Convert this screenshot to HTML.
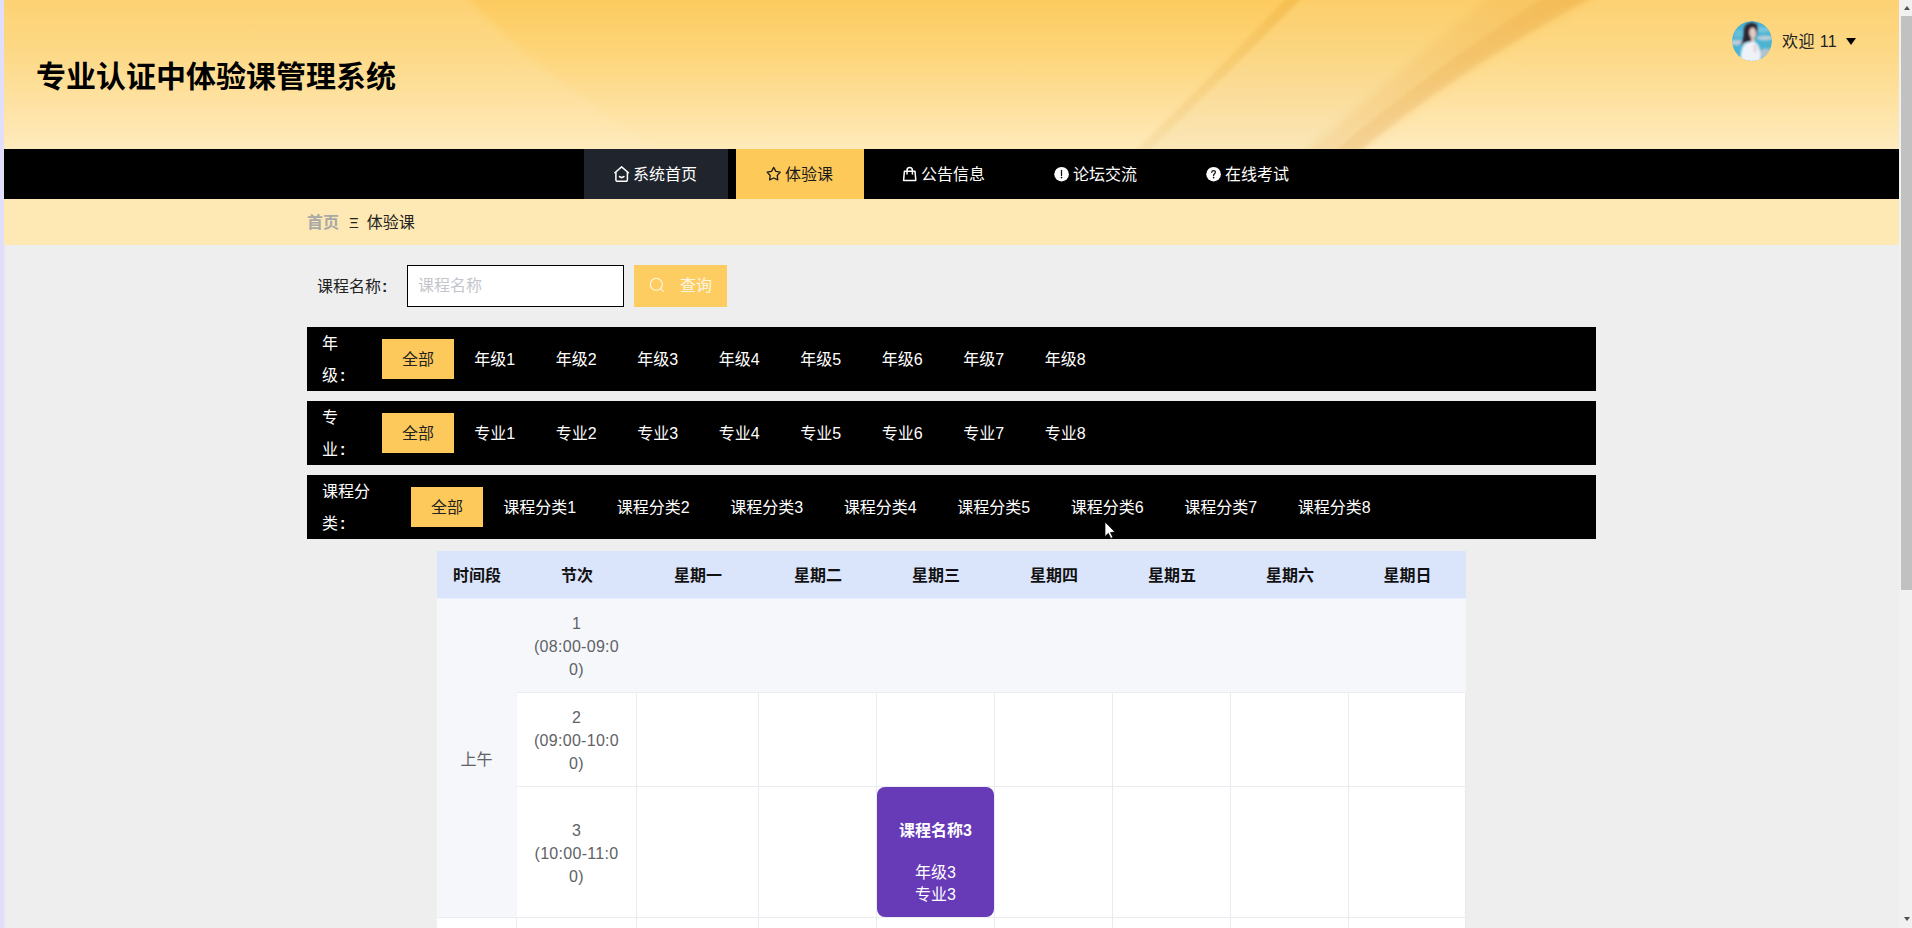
<!DOCTYPE html>
<html lang="zh-CN">
<head>
<meta charset="utf-8">
<title>专业认证中体验课管理系统</title>
<style>
*{box-sizing:border-box;margin:0;padding:0}
html,body{width:1912px;height:928px;overflow:hidden}
body{position:relative;background:#eeeeef;font-family:"Liberation Sans","Noto Sans CJK SC",sans-serif;font-size:16px;color:#333;-webkit-font-smoothing:antialiased}
.edge{position:absolute;left:0;top:0;width:6px;height:928px;background:linear-gradient(90deg,#e0defa 0,#e0defa 3px,rgba(238,238,238,0) 6px)}
.page{position:absolute;left:4px;top:0;width:1895px;height:928px;overflow:hidden}
/* header */
.header{position:absolute;left:0;top:0;width:1895px;height:149px;background:linear-gradient(180deg,#fdcb5f 0%,#fdd477 33%,#fee09c 70%,#feeaba 100%);overflow:hidden}
.header svg.deco{position:absolute;left:0;top:0}
.title{position:absolute;left:32px;top:54px;font-size:30px;line-height:46px;font-weight:700;color:#000;letter-spacing:0;white-space:nowrap}
.user{position:absolute;left:1728px;top:21px;height:40px;display:flex;align-items:center;white-space:nowrap}
.avatar{width:40px;height:40px;border-radius:50%;overflow:hidden;display:block}
.user .name{margin-left:10px;font-size:16px;color:#222;line-height:40px;letter-spacing:.4px;position:relative;top:1px}
.user .caret{margin-left:9px;width:0;height:0;border-left:5px solid transparent;border-right:5px solid transparent;border-top:7px solid #000}
/* nav */
.nav{position:absolute;left:0;top:149px;width:1895px;height:50px;background:#000}
.nav ul{list-style:none;position:absolute;left:576px;top:0;height:50px;display:flex}
.nav li{height:50px;line-height:50px;padding:0 30px;margin:0 4px;color:#fff;font-size:16px;display:flex;align-items:center;white-space:nowrap}
.nav li span{position:relative;top:1px;left:-1px}
.nav li svg{width:16px;height:16px;margin-right:4px;display:block}
.nav li.home{background:#20242d}
.nav li.active{background:#fdca5a;color:#1a1a1a}
/* breadcrumb */
.crumb{position:absolute;left:0;top:199px;width:1895px;height:46px;background:#fee8b3}
.crumb .in{position:absolute;left:303px;top:1px;line-height:46px;font-size:16px;white-space:nowrap}
.crumb .first{color:#a8a8a8;font-weight:700}
.crumb .sep{margin:0 8px 0 10px;color:#222;font-size:15px}
.crumb .cur{color:#222}
/* search */
.search{position:absolute;left:303px;top:265px;height:42px;width:1289px}
.search label{position:absolute;left:10px;top:1px;line-height:42px;font-size:16px;color:#222;white-space:nowrap}
.search label i{font-style:normal;margin-left:1px;font-weight:700}
.search .ipt{position:absolute;left:100px;top:0;width:217px;height:42px;border:1px solid #000;background:#fff;padding:0 10px;line-height:40px;font-size:16px;color:#c4c6cc;white-space:nowrap}
.search .btn{position:absolute;left:327px;top:0;width:93px;height:42px;background:#fdcd62;color:#fff6e2;font-size:16px;line-height:42px;white-space:nowrap}
.search .btn svg{position:absolute;left:15px;top:12px;width:16px;height:16px}
.search .btn span{position:absolute;left:46px;top:0}
/* filters */
.filter{position:absolute;left:303px;width:1289px;height:64px;background:#000;color:#fff}
.filter .lab{position:absolute;left:15px;top:1px;line-height:32px;font-size:16px;white-space:nowrap}
.filter .lab i{font-style:normal;font-weight:700;margin-left:2px}
.filter ul{list-style:none;position:absolute;top:12px;height:40px;display:flex}
.filter li{height:40px;line-height:42px;padding:0 20.3px;font-size:16px;white-space:nowrap;color:#fff}
.filter li.on{background:#fdc95a;color:#222;padding:0 20px}
/* table */
.tbl{position:absolute;left:433px;top:551px;width:1029px;border-collapse:separate;border-spacing:0;table-layout:fixed;background:#fff}
.tbl th{height:48px;border-bottom:1px solid #eaf0fd;background:#dae4fb;color:#111;font-weight:700;font-size:16px;text-align:center;vertical-align:middle;padding:0 0 2px;white-space:nowrap}
.tbl td{border-bottom:1px solid #e9ebf1;border-right:1px solid #e9ebf1;text-align:center;vertical-align:middle;color:#606266;font-size:16px;line-height:23px;padding:0;background:#fff}
.tbl td.num{padding:13px 10px 11px;letter-spacing:.3px}
.tbl td.num div{width:90px;margin:0 auto;word-break:break-all}
.tbl tr.hov td,.tbl td.hov{background:#f5f7fa}
.tbl tr.hov td{border-right-color:#f4f6f9}
.ap{position:relative;top:1px}
.card{width:117px;height:130px;background:#673ab7;border-radius:8px;color:#fff;position:relative;margin:0}
.card b{position:absolute;left:0;width:117px;top:32px;line-height:23px;font-size:16px;font-weight:700}
.card span{position:absolute;left:0;width:117px;line-height:23px;font-size:16px}
/* scrollbar */
.sb{position:absolute;left:1899px;top:0;width:13px;height:928px;background:#f1f1f1}
.sb .thumb{position:absolute;left:2px;top:16px;width:11px;height:574px;background:#c1c1c1}
.sb .up{position:absolute;left:5px;top:6px;width:0;height:0;border-left:3.5px solid transparent;border-right:3.5px solid transparent;border-bottom:4px solid #505050}
.sb .down{position:absolute;left:5px;top:917px;width:0;height:0;border-left:3.5px solid transparent;border-right:3.5px solid transparent;border-top:4px solid #505050}
</style>
</head>
<body>
<div class="edge"></div>
<div class="page">
  <div class="header">
    <svg class="deco" width="1895" height="149" viewBox="4 0 1895 149">
      <defs>
        <filter id="b2" x="-10%" y="-30%" width="120%" height="160%"><feGaussianBlur stdDeviation="1.6"/></filter>
        <filter id="b3" x="-10%" y="-30%" width="120%" height="160%"><feGaussianBlur stdDeviation="3"/></filter>
        <filter id="b6" x="-10%" y="-30%" width="120%" height="160%"><feGaussianBlur stdDeviation="5"/></filter>
        <linearGradient id="fs" gradientUnits="userSpaceOnUse" x1="0" y1="0" x2="0" y2="149"><stop offset="0" stop-color="#eaa62e" stop-opacity=".34"/><stop offset="1" stop-color="#e8c078" stop-opacity=".22"/></linearGradient>
        <linearGradient id="fw" gradientUnits="userSpaceOnUse" x1="0" y1="0" x2="0" y2="149"><stop offset="0" stop-color="#fff" stop-opacity=".13"/><stop offset="1" stop-color="#fff" stop-opacity=".05"/></linearGradient>
        <linearGradient id="fp" gradientUnits="userSpaceOnUse" x1="0" y1="0" x2="0" y2="149"><stop offset="0" stop-color="#f6dca0" stop-opacity=".18"/><stop offset="1" stop-color="#ecd8b0" stop-opacity=".22"/></linearGradient>
      </defs>
      <path d="M-20 -20 L452 -20 Q500 36 560 80 Q620 124 672 165 L-20 165Z" fill="url(#fw)" filter="url(#b3)"/>
      <path d="M1140 160 Q1232 62 1304 -10 L1560 -10 Q1420 72 1320 160Z" fill="url(#fp)" filter="url(#b6)"/>
      <path d="M1126 160 Q1228 60 1294 -10 L1310 -10 Q1238 63 1140 160Z" fill="url(#fs)" filter="url(#b2)"/>
      <path d="M1350 160 Q1452 72 1606 -10 L1920 -10 L1920 160Z" fill="url(#fw)" filter="url(#b6)"/>
      <path d="M1296 160 Q1412 62 1496 -10 L1606 -10 Q1452 72 1350 160Z" fill="#e6a03c" opacity=".17" filter="url(#b6)"/>
      <path d="M1324 160 Q1434 66 1556 -10 L1606 -10 Q1452 72 1350 160Z" fill="#dc9c50" opacity=".17" filter="url(#b2)"/>
    </svg>
    <div class="title">专业认证中体验课管理系统</div>
    <div class="user">
      <svg class="avatar" viewBox="0 0 40 40">
        <defs><filter id="ab" x="-20%" y="-20%" width="140%" height="140%"><feGaussianBlur stdDeviation="1"/></filter><clipPath id="ac"><circle cx="20" cy="20" r="20"/></clipPath></defs>
        <g clip-path="url(#ac)">
          <rect width="40" height="40" fill="#4cb3d3"/>
          <g filter="url(#ab)">
            <rect x="26" y="6" width="11" height="5.5" fill="#86cbe0" opacity=".7"/>
            <rect x="2" y="9" width="8" height="7" fill="#7cc4dc" opacity=".6"/>
            <ellipse cx="5" cy="21.5" rx="8" ry="2.8" fill="#cfd0dc" opacity=".85"/>
            <ellipse cx="33" cy="17" rx="8" ry="2.4" fill="#d6d3da" opacity=".8"/>
            <ellipse cx="34" cy="32.5" rx="7" ry="5" fill="#cdc5cc" opacity=".8"/>
            <path d="M19 1.6 Q26.4 1.6 25.9 8.5 Q25.5 13.5 23 17.5 L19 20.5 Q13 20 7.8 24.8 Q12 18 11.6 11 Q11.4 3 19 1.6Z" fill="#2a2530"/>
            <ellipse cx="20.8" cy="12" rx="3.5" ry="5.4" fill="#e4c9c5" transform="rotate(-6 20.8 12)"/>
            <path d="M19 17 L22.5 17 L23 21.5 L19.5 22Z" fill="#e2c6c0"/>
            <path d="M8.6 41 Q8 27.5 13 22.8 Q18 19.6 23.4 21.2 Q29 24 28.8 41Z" fill="#eef2f9"/>
            <ellipse cx="23.2" cy="27.5" rx="1.7" ry="4.2" fill="#e5d3ce"/>
          </g>
        </g>
      </svg>
      <span class="name">欢迎 11</span><i class="caret"></i>
    </div>
  </div>
  <div class="nav">
    <ul>
      <li class="home"><svg viewBox="0 0 16 16" fill="none" stroke="currentColor" stroke-width="1.5" stroke-linecap="round" stroke-linejoin="round"><path d="M0.9 6.8 L7.6 0.9 L14.4 6.8"/><path d="M1.9 6.4 V14 Q1.9 15.3 3.2 15.3 H12.1 Q13.4 15.3 13.4 14 V6.4"/><path d="M5.6 10.6 Q7.7 12.4 9.8 10.6" stroke-width="1.7"/></svg><span>系统首页</span></li>
      <li class="active"><svg viewBox="0 0 16 16" fill="none" stroke="currentColor" stroke-width="1.3" stroke-linejoin="round"><polygon points="7.70,1.40 9.87,5.31 14.26,6.17 11.22,9.44 11.76,13.88 7.70,12.00 3.64,13.88 4.18,9.44 1.14,6.17 5.53,5.31"/></svg><span>体验课</span></li>
      <li><svg viewBox="0 0 16 16" fill="none" stroke="currentColor" stroke-width="1.5" stroke-linejoin="round" stroke-linecap="round"><path d="M2.4 5.2 H13 L13.8 14.4 H1.6 Z"/><path d="M5 8 V4.4 Q5 1.6 7.7 1.6 Q10.4 1.6 10.4 4.4 V8"/></svg><span>公告信息</span></li>
      <li><svg viewBox="0 0 16 16"><circle cx="7.6" cy="8.2" r="7.3" fill="currentColor"/><path d="M7.5 4.4 V9.6" stroke="#111" stroke-width="1.25" stroke-linecap="round" fill="none"/><circle cx="7.5" cy="11.6" r=".85" fill="#111"/></svg><span>论坛交流</span></li>
      <li><svg viewBox="0 0 16 16"><circle cx="7.6" cy="8.2" r="7.3" fill="currentColor"/><path d="M5.7 6.3 Q5.8 4.6 7.6 4.6 Q9.4 4.6 9.4 6.1 Q9.4 7.2 8.4 7.9 Q7.6 8.4 7.6 9.5" stroke="#111" stroke-width="1.25" stroke-linecap="round" fill="none"/><circle cx="7.6" cy="11.6" r=".85" fill="#111"/></svg><span>在线考试</span></li>
    </ul>
  </div>
  <div class="crumb"><div class="in"><span class="first">首页</span><span class="sep">Ξ</span><span class="cur">体验课</span></div></div>

  <div class="search">
    <label>课程名称<i>:</i></label>
    <div class="ipt">课程名称</div>
    <div class="btn"><svg viewBox="0 0 16 16" fill="none" stroke="currentColor" stroke-width="1.1" stroke-linecap="round"><circle cx="7.3" cy="7.3" r="6"/><path d="M11.6 11.6 L14.3 14.3"/></svg><span>查询</span></div>
  </div>

  <div class="filter" style="top:327px">
    <div class="lab">年<br>级<i>:</i></div>
    <ul style="left:75px"><li class="on">全部</li><li>年级1</li><li>年级2</li><li>年级3</li><li>年级4</li><li>年级5</li><li>年级6</li><li>年级7</li><li>年级8</li></ul>
  </div>
  <div class="filter" style="top:401px">
    <div class="lab">专<br>业<i>:</i></div>
    <ul style="left:75px"><li class="on">全部</li><li>专业1</li><li>专业2</li><li>专业3</li><li>专业4</li><li>专业5</li><li>专业6</li><li>专业7</li><li>专业8</li></ul>
  </div>
  <div class="filter" style="top:475px">
    <div class="lab">课程分<br>类<i>:</i></div>
    <ul style="left:104px"><li class="on">全部</li><li>课程分类1</li><li>课程分类2</li><li>课程分类3</li><li>课程分类4</li><li>课程分类5</li><li>课程分类6</li><li>课程分类7</li><li>课程分类8</li></ul>
  </div>

  <svg class="mouse" width="12" height="18" viewBox="0 0 12 18" style="position:absolute;left:1101px;top:522px"><path d="M0 0 L0 14.5 L3.4 11.3 L5.8 16.4 L7.9 15.5 L5.5 10.5 L10 10 Z" fill="#fff" stroke="#000" stroke-width=".7"/></svg>
  <table class="tbl">
    <colgroup><col style="width:80px"><col style="width:120px"><col style="width:122px"><col style="width:118px"><col style="width:118px"><col style="width:118px"><col style="width:118px"><col style="width:118px"><col style="width:117px"></colgroup>
    <thead><tr><th>时间段</th><th>节次</th><th>星期一</th><th>星期二</th><th>星期三</th><th>星期四</th><th>星期五</th><th>星期六</th><th>星期日</th></tr></thead>
    <tbody>
      <tr class="hov"><td rowspan="3" class="hov"><span class="ap">上午</span></td><td class="num"><div>1<br>(08:00-09:00)</div></td><td></td><td></td><td></td><td></td><td></td><td></td><td></td></tr>
      <tr><td class="num"><div>2<br>(09:00-10:00)</div></td><td></td><td></td><td></td><td></td><td></td><td></td><td></td></tr>
      <tr><td class="num"><div>3<br>(10:00-11:00)</div></td><td></td><td></td><td><div class="card"><b>课程名称3</b><span style="top:74px">年级3</span><span style="top:96px">专业3</span></div></td><td></td><td></td><td></td><td></td></tr>
      <tr><td rowspan="3">下午</td><td class="num"><div>4<br>(14:00-15:00)</div></td><td></td><td></td><td></td><td></td><td></td><td></td><td></td></tr>
    </tbody>
  </table>
</div>
<div class="sb"><i class="up"></i><i class="thumb"></i><i class="down"></i></div>
</body>
</html>
